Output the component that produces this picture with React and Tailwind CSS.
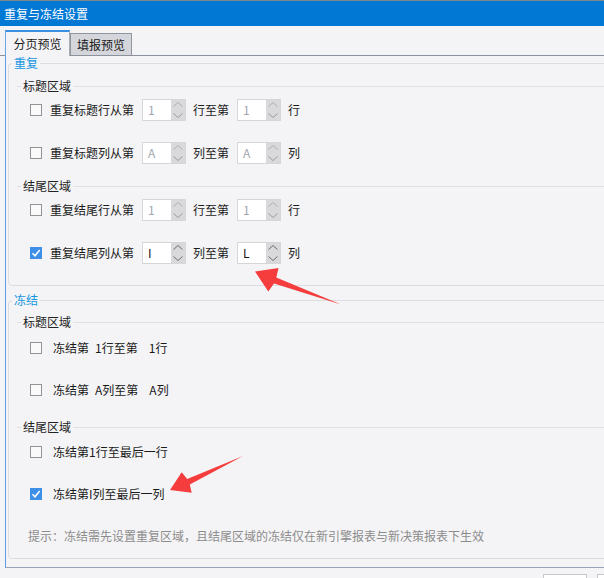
import React from "react";

function Checkbox({ checked }) {
  if (checked) {
    return (
      <div className="w-[12px] h-[12px] shrink-0 bg-[#3d8fe8] flex items-center justify-center">
        <svg width="10" height="10" viewBox="0 0 10 10">
          <polyline points="1.5,5.2 4,7.8 8.7,2" fill="none" stroke="#fff" strokeWidth="1.6" />
        </svg>
      </div>
    );
  }
  return <div className="w-[12px] h-[12px] shrink-0 border border-[#939393] bg-[#fafafa]" />;
}

function Spin({ value, active }) {
  const chev = active ? "#6e6e6e" : "#9a9a9a";
  return (
    <div className="flex h-[22px] w-[44px] shrink-0 border border-[#d6d6d8] bg-white">
      <div className={`flex-1 flex items-center pl-[5px] ${active ? "text-[#111]" : "text-[#a3a6b0]"}`}>
        {value}
      </div>
      <div className="w-[14px] bg-[#d9d9dc]">
        <svg width="14" height="20" viewBox="0 0 14 20">
          <polyline points="2.5,6.5 7,2.5 11.5,6.5" fill="none" stroke={active ? chev : "#b0b0b0"} strokeWidth="1" />
          <polyline points="2.5,13.5 7,17.5 11.5,13.5" fill="none" stroke={chev} strokeWidth="1" />
        </svg>
      </div>
    </div>
  );
}

function SpinRow({ checked, label, from, mid, to, unit, className }) {
  return (
    <div className={`flex items-center h-[22px] pl-[13px] ${className}`}>
      <Checkbox checked={checked} />
      <span className="ml-[8px]">{label}</span>
      <div className="ml-[8px]">
        <Spin value={from} active={checked} />
      </div>
      <span className="ml-[7px]">{mid}</span>
      <div className="ml-[8px]">
        <Spin value={to} active={checked} />
      </div>
      <span className="ml-[7px]">{unit}</span>
    </div>
  );
}

function FreezeRow({ checked, children, className }) {
  return (
    <div className={`flex items-center h-[22px] pl-[13px] ${className}`}>
      <Checkbox checked={checked} />
      <span className="ml-[11px] whitespace-pre">{children}</span>
    </div>
  );
}

function SubGroup({ title, className, children }) {
  return (
    <fieldset className={`ml-[8px] border-t border-[#dfe0e5] ${className}`}>
      <legend className="ml-[4px] px-[2px] leading-[14px] text-[#222]">{title}</legend>
      {children}
    </fieldset>
  );
}

function Group({ title, className, children }) {
  return (
    <fieldset className={`ml-[2px] border border-[#dcdde3] rounded-[4px] w-[640px] ${className}`}>
      <legend className="ml-[3px] px-[2px] leading-[14px] text-[#1596e0]">{title}</legend>
      {children}
    </fieldset>
  );
}

export default function App() {
  return (
    <div className="relative w-[604px] h-[578px] overflow-hidden bg-[#f4f4f6] text-[12px] text-[#1a1a1a] font-['Noto_Sans_CJK_SC',sans-serif]">
      {/* Title bar */}
      <div className="h-[26px] border-t border-[#858585] bg-[#0078d4] text-white flex items-center pl-[4px]">
        重复与冻结设置
      </div>

      {/* Tabs */}
      <div className="h-[30px] flex items-end pl-[5px] border-b border-[#8c929c]">
        <div className="relative z-10 -mb-px h-[26px] w-[65px] flex items-center justify-center bg-[#f4f4f6] border-t-2 border-l border-r border-t-[#3b8fe0] border-l-[#6aa6e6] border-r-[#a8adb6]">
          分页预览
        </div>
        <div className="h-[22px] w-[62px] flex items-center justify-center bg-[#d5d6db] border border-b-0 border-[#8f96a0]">
          填报预览
        </div>
      </div>

      {/* Panel */}
      <div className="ml-[5px] w-[640px] h-[512px] border-l border-b border-l-[#5b9ce2] border-b-[#9aa4b6] pb-[8px]">
        <Group title="重复" className="pb-[21px]">
          <SubGroup title="标题区域" className="mt-[9px]">
            <SpinRow className="mt-[6px]" label="重复标题行从第" from="1" mid="行至第" to="1" unit="行" />
            <SpinRow className="mt-[21px]" label="重复标题列从第" from="A" mid="列至第" to="A" unit="列" />
          </SubGroup>
          <SubGroup title="结尾区域" className="mt-[15px]">
            <SpinRow className="mt-[6px]" label="重复结尾行从第" from="1" mid="行至第" to="1" unit="行" />
            <SpinRow className="mt-[21px]" checked label="重复结尾列从第" from="I" mid="列至第" to="L" unit="列" />
          </SubGroup>
        </Group>

        <Group title="冻结" className="mt-[7px] pb-[15px]">
          <SubGroup title="标题区域" className="mt-[8px]">
            <FreezeRow className="mt-[8px]">
              冻结第<span className="ml-[6px]">1</span>行至第<span className="ml-[11px]">1</span>行
            </FreezeRow>
            <FreezeRow className="mt-[20px]">
              冻结第<span className="ml-[6px]">A</span>列至第<span className="ml-[11px]">A</span>列
            </FreezeRow>
          </SubGroup>
          <SubGroup title="结尾区域" className="mt-[19px]">
            <FreezeRow className="mt-[7px]">冻结第1行至最后一行</FreezeRow>
            <FreezeRow className="mt-[20px]" checked>冻结第I列至最后一列</FreezeRow>
          </SubGroup>
          <div className="mt-[24px] ml-[19px] leading-[14px] text-[#8c8c8c]">
            提示：冻结需先设置重复区域，且结尾区域的冻结仅在新引擎报表与新决策报表下生效
          </div>
        </Group>
      </div>

      {/* Dialog buttons, cut off at the bottom */}
      <div className="flex gap-[10px] pl-[543px] pt-[6px]">
        <div className="w-[44px] h-[24px] shrink-0 border border-[#c9c9cc] bg-white" />
        <div className="w-[44px] h-[24px] shrink-0 border border-[#c9c9cc] bg-white" />
      </div>

      {/* Red annotation arrows */}
      <svg className="absolute left-0 top-0 pointer-events-none" width="604" height="578" viewBox="0 0 604 578">
        <polygon
          points="255,271.5 278.5,268 276.3,277.4 341,304.5 274,283.4 268.3,291.5"
          fill="#f53d3d"
        />
        <polygon
          points="170,490 181.7,472.3 187.2,479 243,456 189.8,484.6 191.7,492.7"
          fill="#f53d3d"
        />
      </svg>
    </div>
  );
}
